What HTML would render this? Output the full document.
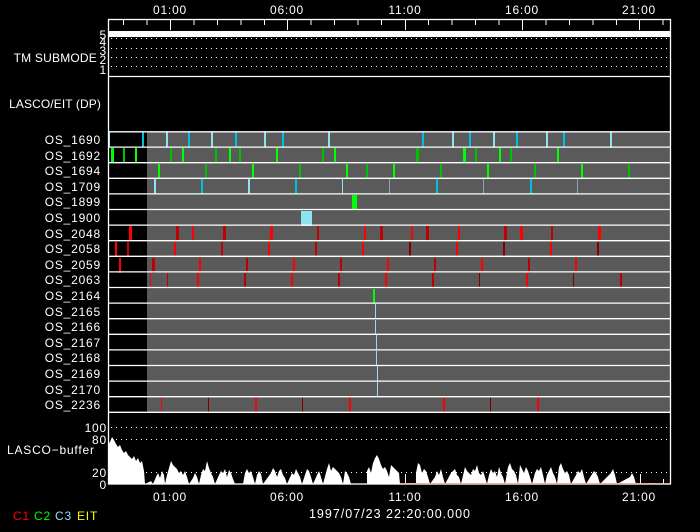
<!DOCTYPE html>
<html><head><meta charset="utf-8"><style>
html,body{margin:0;padding:0;background:#000;width:700px;height:532px;overflow:hidden}
svg{display:block}
text{font-family:"Liberation Sans",sans-serif;fill:#fff;font-size:12px;letter-spacing:0.8px}
</style></head><body>
<svg width="700" height="532" xmlns="http://www.w3.org/2000/svg">
<rect width="700" height="532" fill="#000"/>
<g text-anchor="middle" style="font-size:12.5px;letter-spacing:1.3px">
<text x="170" y="14">01:00</text><text x="287" y="14">06:00</text><text x="405" y="14">11:00</text><text x="522" y="14">16:00</text><text x="639" y="14">21:00</text>
<text x="170" y="501">01:00</text><text x="287" y="501">06:00</text><text x="405" y="501">11:00</text><text x="522" y="501">16:00</text><text x="639" y="501">21:00</text>
</g>
<g stroke="#fff" stroke-width="1">
<line x1="123.5" y1="20" x2="123.5" y2="25"/><line x1="147" y1="20" x2="147" y2="25"/><line x1="170.5" y1="20" x2="170.5" y2="30"/><line x1="194" y1="20" x2="194" y2="25"/><line x1="217.5" y1="20" x2="217.5" y2="25"/><line x1="241" y1="20" x2="241" y2="25"/><line x1="264.5" y1="20" x2="264.5" y2="25"/><line x1="287.5" y1="20" x2="287.5" y2="30"/><line x1="311" y1="20" x2="311" y2="25"/><line x1="334.5" y1="20" x2="334.5" y2="25"/><line x1="358" y1="20" x2="358" y2="25"/><line x1="381.5" y1="20" x2="381.5" y2="25"/><line x1="405.5" y1="20" x2="405.5" y2="30"/><line x1="428.5" y1="20" x2="428.5" y2="25"/><line x1="452" y1="20" x2="452" y2="25"/><line x1="475.5" y1="20" x2="475.5" y2="25"/><line x1="499" y1="20" x2="499" y2="25"/><line x1="522.5" y1="20" x2="522.5" y2="30"/><line x1="546" y1="20" x2="546" y2="25"/><line x1="569.5" y1="20" x2="569.5" y2="25"/><line x1="593" y1="20" x2="593" y2="25"/><line x1="616.5" y1="20" x2="616.5" y2="25"/><line x1="639.5" y1="20" x2="639.5" y2="30"/><line x1="663" y1="20" x2="663" y2="25"/>
</g>
<rect x="108" y="31" width="563" height="6" fill="#fff"/>
<g stroke="#fff" stroke-dasharray="1 4" stroke-width="1">
<line x1="111" y1="38.5" x2="670" y2="38.5"/><line x1="111" y1="48.5" x2="670" y2="48.5"/><line x1="111" y1="57.5" x2="670" y2="57.5"/><line x1="111" y1="66.5" x2="670" y2="66.5"/>
<line x1="111" y1="427.5" x2="670" y2="427.5"/><line x1="111" y1="439.5" x2="670" y2="439.5"/><line x1="111" y1="472.5" x2="670" y2="472.5"/>
</g>
<g text-anchor="end" style="font-size:12px;letter-spacing:1px">
<text x="107" y="39">5</text><text x="107" y="46">4</text><text x="107" y="55">3</text><text x="107" y="64">2</text><text x="107" y="74">1</text>
<text x="107" y="432">100</text><text x="107" y="444">80</text><text x="107" y="477">20</text><text x="107" y="489">0</text>
</g>
<text x="97" y="62" text-anchor="end" style="letter-spacing:0.2px">TM SUBMODE</text>
<text x="101" y="108" text-anchor="end" style="letter-spacing:0.1px">LASCO/EIT (DP)</text>
<text x="7" y="454">LASCO−buffer</text>
<rect x="147" y="131.5" width="523" height="281" fill="#5a5a5a"/>
<g text-anchor="end" style="font-size:12.5px;letter-spacing:1px">
<text x="101" y="144">OS_1690</text><text x="101" y="160">OS_1692</text><text x="101" y="175">OS_1694</text><text x="101" y="191">OS_1709</text><text x="101" y="206">OS_1899</text><text x="101" y="222">OS_1900</text><text x="101" y="238">OS_2048</text><text x="101" y="253">OS_2058</text><text x="101" y="269">OS_2059</text><text x="101" y="284">OS_2063</text><text x="101" y="300">OS_2164</text><text x="101" y="316">OS_2165</text><text x="101" y="331">OS_2166</text><text x="101" y="347">OS_2167</text><text x="101" y="362">OS_2168</text><text x="101" y="378">OS_2169</text><text x="101" y="394">OS_2170</text><text x="101" y="409">OS_2236</text>
</g>
<g transform="translate(0,132)">
<rect x="108" width="2" height="15" fill="#8de3ef"/><rect x="142" width="2" height="15" fill="#00bfe0"/><rect x="166" width="2" height="15" fill="#8de3ef"/><rect x="188" width="2" height="15" fill="#00bfe0"/><rect x="211" width="2" height="15" fill="#8de3ef"/><rect x="235" width="2" height="15" fill="#00bfe0"/><rect x="264" width="2" height="15" fill="#8de3ef"/><rect x="282" width="2" height="15" fill="#00bfe0"/><rect x="328" width="2" height="15" fill="#8de3ef"/><rect x="422" width="2" height="15" fill="#00bfe0"/><rect x="452" width="2" height="15" fill="#8de3ef"/><rect x="469" width="2" height="15" fill="#00bfe0"/><rect x="493" width="2" height="15" fill="#8de3ef"/><rect x="516" width="2" height="15" fill="#00bfe0"/><rect x="546" width="2" height="15" fill="#8de3ef"/><rect x="563" width="2" height="15" fill="#00bfe0"/><rect x="610" width="2" height="15" fill="#8de3ef"/>
</g>
<g transform="translate(0,148)">
<rect x="111" width="3" height="15" fill="#00ff00"/><rect x="123" width="2" height="15" fill="#00c000"/><rect x="135" width="2" height="15" fill="#00ff00"/><rect x="170" width="2" height="15" fill="#00c000"/><rect x="182" width="2" height="15" fill="#00ff00"/><rect x="215" width="2" height="15" fill="#00c000"/><rect x="229" width="2" height="15" fill="#00ff00"/><rect x="239" width="2" height="15" fill="#00c000"/><rect x="276" width="2" height="15" fill="#00ff00"/><rect x="322" width="2" height="15" fill="#00c000"/><rect x="334" width="2" height="15" fill="#00ff00"/><rect x="416" width="3" height="15" fill="#00c000"/><rect x="463" width="3" height="15" fill="#00ff00"/><rect x="475" width="2" height="15" fill="#00c000"/><rect x="499" width="2" height="15" fill="#00ff00"/><rect x="510" width="2" height="15" fill="#00c000"/><rect x="557" width="2" height="15" fill="#00ff00"/>
</g>
<g transform="translate(0,164)">
<rect x="158" width="2" height="14" fill="#00ff00"/><rect x="205" width="2" height="14" fill="#00c000"/><rect x="252" width="2" height="14" fill="#00ff00"/><rect x="299" width="2" height="14" fill="#00c000"/><rect x="346" width="2" height="14" fill="#00ff00"/><rect x="366" width="2" height="14" fill="#00c000"/><rect x="393" width="2" height="14" fill="#00ff00"/><rect x="440" width="2" height="14" fill="#00c000"/><rect x="487" width="2" height="14" fill="#00ff00"/><rect x="534" width="2" height="14" fill="#00c000"/><rect x="581" width="2" height="14" fill="#00ff00"/><rect x="628" width="2" height="14" fill="#00c000"/>
</g>
<g transform="translate(0,179)">
<rect x="154" width="2" height="15" fill="#8de3ef"/><rect x="201" width="2" height="15" fill="#00bfe0"/><rect x="248" width="2" height="15" fill="#8de3ef"/><rect x="295" width="2" height="15" fill="#00bfe0"/><rect x="342" width="1" height="15" fill="#8de3ef"/><rect x="389" width="1" height="15" fill="#8aa"/><rect x="436" width="2" height="15" fill="#00bfe0"/><rect x="483" width="1" height="15" fill="#8aa"/><rect x="530" width="2" height="15" fill="#00bfe0"/><rect x="577" width="1" height="15" fill="#8aa"/>
</g>
<rect x="352" y="195" width="5" height="15" fill="#00ff00"/>
<rect x="301" y="211" width="11" height="15" fill="#8de3ef"/>
<g transform="translate(0,226)" fill="#ff0000">
<rect x="129" width="3" height="15"/><rect x="176" width="3" height="15" fill="#c00000"/><rect x="192" width="2" height="15"/><rect x="223" width="3" height="15" fill="#c00000"/><rect x="270" width="3" height="15"/><rect x="317" width="2" height="15" fill="#c00000"/><rect x="364" width="2" height="15"/><rect x="380" width="3" height="15" fill="#c00000"/><rect x="411" width="2" height="15"/><rect x="426" width="3" height="15" fill="#c00000"/><rect x="458" width="2" height="15"/><rect x="504" width="3" height="15" fill="#c00000"/><rect x="520" width="3" height="15"/><rect x="551" width="2" height="15" fill="#c00000"/><rect x="598" width="3" height="15"/>
</g>
<g transform="translate(0,242)" fill="#ff0000">
<rect x="115" width="2" height="15"/><rect x="127" width="2" height="15" fill="#c00000"/><rect x="174" width="2" height="15"/><rect x="221" width="2" height="15" fill="#c00000"/><rect x="268" width="2" height="15"/><rect x="315" width="2" height="15" fill="#c00000"/><rect x="362" width="2" height="15"/><rect x="409" width="2" height="15" fill="#800000"/><rect x="456" width="2" height="15"/><rect x="503" width="2" height="15" fill="#800000"/><rect x="550" width="2" height="15"/><rect x="597" width="2" height="15" fill="#800000"/>
</g>
<g transform="translate(0,258)" fill="#ff0000">
<rect x="119" width="2" height="15"/><rect x="152" width="3" height="15" fill="#c00000"/><rect x="199" width="2" height="15"/><rect x="246" width="2" height="15" fill="#c00000"/><rect x="293" width="2" height="15"/><rect x="340" width="2" height="15" fill="#c00000"/><rect x="387" width="2" height="15"/><rect x="434" width="2" height="15" fill="#c00000"/><rect x="481" width="2" height="15"/><rect x="528" width="2" height="15" fill="#c00000"/><rect x="575" width="2" height="15"/>
</g>
<g transform="translate(0,273)" fill="#ff0000">
<rect x="150" width="1" height="15"/><rect x="167" width="1" height="15" fill="#c00000"/><rect x="197" width="2" height="15"/><rect x="244" width="2" height="15" fill="#c00000"/><rect x="291" width="2" height="15"/><rect x="338" width="2" height="15" fill="#c00000"/><rect x="385" width="2" height="15"/><rect x="432" width="2" height="15" fill="#c00000"/><rect x="479" width="1" height="15" fill="#800000"/><rect x="526" width="2" height="15"/><rect x="573" width="1" height="15" fill="#800000"/><rect x="620" width="2" height="15" fill="#c00000"/>
</g>
<rect x="373" y="289" width="2" height="15" fill="#00ff00"/>
<g fill="#8de3ef">
<rect x="375" y="304" width="1" height="15"/><rect x="375" y="320" width="1" height="15"/><rect x="376" y="335" width="1" height="15"/><rect x="376" y="351" width="1" height="15"/><rect x="377" y="366" width="1" height="15"/><rect x="377" y="382" width="1" height="15"/>
</g>
<g transform="translate(0,397)" fill="#ff0000">
<rect x="161" width="1" height="15"/><rect x="208" width="1" height="15" fill="#800000"/><rect x="255" width="2" height="15"/><rect x="302" width="1" height="15" fill="#800000"/><rect x="349" width="2" height="15"/><rect x="443" width="2" height="15"/><rect x="490" width="1" height="15" fill="#800000"/><rect x="537" width="2" height="15"/>
</g>
<g stroke="#fff" stroke-width="1.3">
<line x1="108" y1="147.1" x2="670" y2="147.1"/><line x1="108" y1="162.7" x2="670" y2="162.7"/><line x1="108" y1="178.3" x2="670" y2="178.3"/><line x1="108" y1="193.9" x2="670" y2="193.9"/><line x1="108" y1="209.5" x2="670" y2="209.5"/><line x1="108" y1="225.1" x2="670" y2="225.1"/><line x1="108" y1="240.7" x2="670" y2="240.7"/><line x1="108" y1="256.3" x2="670" y2="256.3"/><line x1="108" y1="271.9" x2="670" y2="271.9"/><line x1="108" y1="287.5" x2="670" y2="287.5"/><line x1="108" y1="303.1" x2="670" y2="303.1"/><line x1="108" y1="318.7" x2="670" y2="318.7"/><line x1="108" y1="334.3" x2="670" y2="334.3"/><line x1="108" y1="349.9" x2="670" y2="349.9"/><line x1="108" y1="365.5" x2="670" y2="365.5"/><line x1="108" y1="381.1" x2="670" y2="381.1"/><line x1="108" y1="396.7" x2="670" y2="396.7"/>
</g>
<path fill="#fff" d="M108,484 L108,444 L110,442 L112,437 L114,440 L116,444 L118,447 L120,445 L122,450 L124,453 L126,451 L128,455 L130,457 L132,459 L134,456 L136,461 L138,458 L140,463 L142,461 L144,471 L145,484
L151,481 L153,484 L156,477 L158,473 L160,478 L162,471 L164,475 L165,484
L167,475 L169,468 L171,461 L173,465 L175,467 L177,469 L179,473 L181,471 L183,475 L185,471 L187,477 L189,484
L193,478 L195,473 L197,477 L199,484 L201,475 L203,469 L205,471 L207,461 L209,468 L211,473 L213,477 L215,484
L219,475 L221,471 L223,473 L225,469 L227,477 L229,470 L231,473 L233,479 L235,484 L243,484
L245,473 L247,469 L249,473 L251,471 L253,477 L255,484 L257,475 L259,471 L261,474 L263,484
L271,473 L273,468 L275,471 L277,477 L279,471 L281,469 L283,475 L285,478 L287,484
L292,473 L294,475 L296,469 L298,473 L300,477 L302,484 L305,475 L307,469 L309,471 L311,477 L313,484
L317,475 L319,471 L321,477 L323,484 L327,469 L329,463 L331,471 L333,467 L335,469 L337,471 L339,473 L341,477 L343,484
L345,471 L347,473 L349,477 L351,484 L367,484 L367,471 L369,467 L371,473 L373,463 L375,458 L377,455 L379,459 L381,465 L383,469 L385,467 L387,471 L389,477 L391,465 L393,467 L395,469 L397,471 L399,473 L400,484
L416,484 L416,473 L418,463 L420,465 L422,473 L424,469 L426,471 L428,477 L430,484
L435,477 L437,471 L439,475 L441,469 L443,477 L445,484 L451,473 L453,471 L455,469 L457,475 L459,477 L461,484
L465,467 L467,471 L469,473 L471,475 L473,469 L475,471 L477,465 L479,473 L481,475 L483,471 L485,477 L487,484
L489,475 L491,469 L493,473 L495,471 L497,477 L499,467 L501,473 L503,477 L505,484
L508,467 L510,463 L512,469 L514,471 L516,475 L518,484 L520,465 L522,469 L524,473 L526,467 L528,471 L530,477 L532,484
L535,473 L537,469 L539,471 L541,467 L543,475 L545,484 L547,475 L549,471 L551,467 L553,473 L555,477 L557,484
L559,467 L561,463 L563,469 L565,473 L567,471 L569,475 L571,484 L576,475 L578,471 L580,473 L582,469 L584,477 L586,484
L594,471 L596,473 L598,477 L600,484 L611,473 L613,469 L615,475 L617,484 L630,477 L632,473 L634,477 L636,484 Z"/>
<g stroke="#fff" stroke-width="1"><line x1="405.5" y1="474" x2="405.5" y2="484"/><line x1="640.5" y1="474" x2="640.5" y2="484"/><line x1="663.5" y1="479" x2="663.5" y2="484"/></g>
<line x1="400" y1="483.5" x2="670" y2="483.5" stroke="#ff0000" stroke-width="1"/>
<g stroke="#fff" stroke-width="1.3" fill="none">
<rect x="108.5" y="19.5" width="562" height="464.5"/>
<line x1="108" y1="76.5" x2="670" y2="76.5"/>
<line x1="108" y1="131.8" x2="670" y2="131.8"/>
<line x1="108" y1="412.3" x2="670" y2="412.3"/>
</g>
<g style="font-size:11px;letter-spacing:1px">
<text x="13" y="520" style="fill:#ff0000">C1</text><text x="34" y="520" style="fill:#00ff00">C2</text><text x="55" y="520" style="fill:#8de3ef">C3</text><text x="77" y="520" style="fill:#ffff00">EIT</text>
</g>
<text x="390" y="518" text-anchor="middle" style="font-size:12.5px;letter-spacing:1px">1997/07/23 22:20:00.000</text>
</svg>
</body></html>
